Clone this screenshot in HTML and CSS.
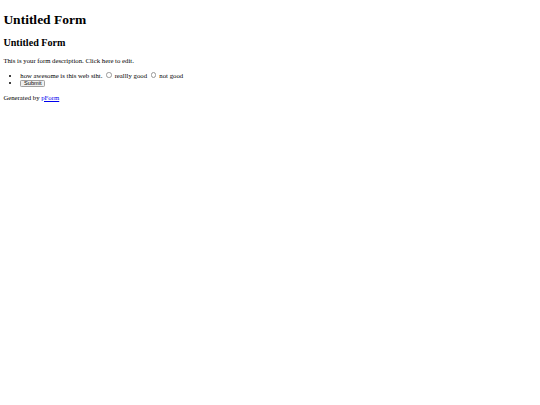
FILE: index.html
```html
<!DOCTYPE html>
<html>
<head>
<meta charset="utf-8">
<title>Untitled Form</title>
<link rel="stylesheet" href="styles.css">
</head>
<body>
<h1 class="title">Untitled Form</h1>
<form class="form">
<h2 class="form-title">Untitled Form</h2>
<p class="desc">This is your form description. Click here to edit.</p>
<ul class="fields">
<li class="field">how awesome is this web siht. <input class="radio" type="radio" name="q1"> reallly good <input class="radio" type="radio" name="q1"> not good</li>
<li class="field"><button class="submit" type="submit">Submit</button></li>
</ul>
</form>
<p class="footer">Generated by <a class="link" href="#">pForm</a></p>
</body>
</html>
```

FILE: styles.css
```css
html { background: #fff; }
body {
  margin: 3.375px;
  font-family: "Liberation Serif", "Times New Roman", serif;
  font-size: 6.75px;
  color: #000;
}
.title {
  font-size: 13.5px;
  margin: 9.045px 0;
  font-weight: bold;
}
.form-title {
  font-size: 10.125px;
  margin: 8.404px 0;
  font-weight: bold;
}
.desc, .footer {
  margin: 6.75px 0;
}
.fields {
  margin: 6.75px 0;
  padding-left: 16.875px;
  list-style: disc;
}
.field {
  height: 8.3px;
  line-height: 8.3px;
}
.field:first-child {
  line-height: 9.3px;
}
.radio {
  -webkit-appearance: none;
  appearance: none;
  box-sizing: border-box;
  display: inline-block;
  width: 5.5px;
  height: 5.5px;
  margin: 0 1.27px 0 2.11px;
  border: 0.6px solid #999;
  border-radius: 50%;
  background: #fff;
  vertical-align: -0.3px;
}
.submit {
  -webkit-appearance: none;
  appearance: none;
  box-sizing: border-box;
  display: inline-flex;
  align-items: center;
  justify-content: center;
  height: 7.6px;
  width: 25px;
  font-family: "Liberation Sans", Arial, sans-serif;
  font-size: 5.625px;
  line-height: 1;
  padding: 0;
  margin: 0;
  border: 0.6px solid #a0a0a0;
  border-radius: 1.3px;
  background: #efefef;
  color: #000;
  vertical-align: middle;
}
.link {
  color: #0000ee;
}
```
